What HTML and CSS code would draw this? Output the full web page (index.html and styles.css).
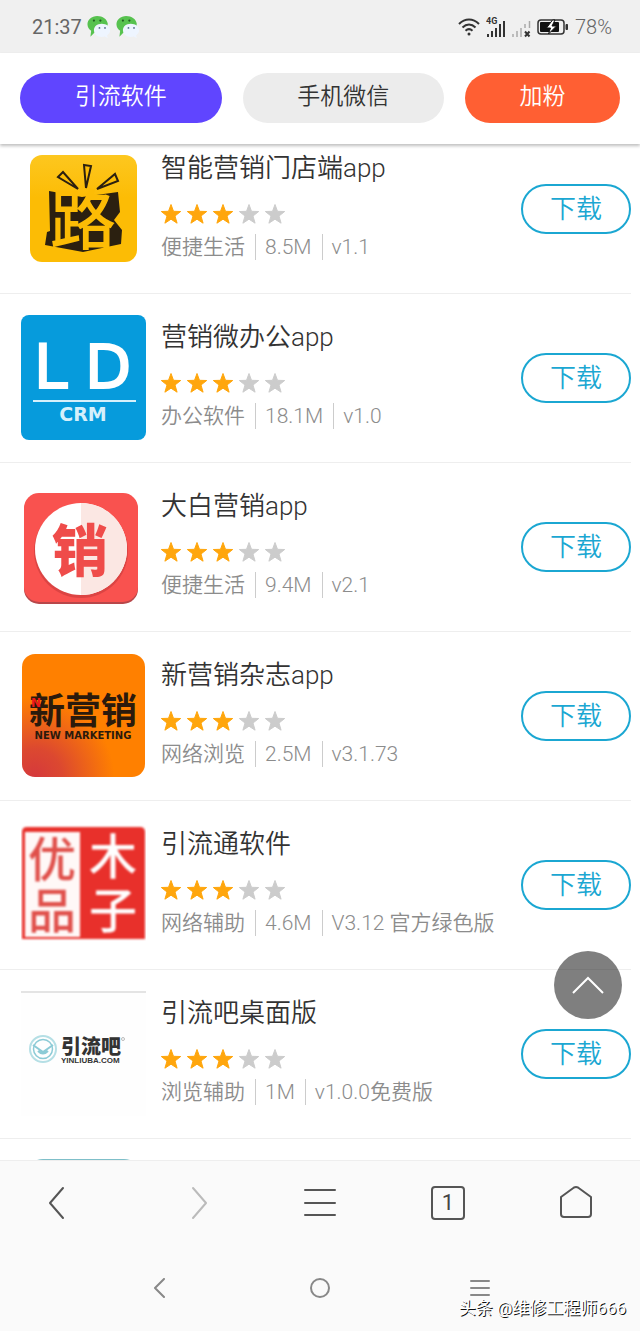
FILE: index.html
```html
<!DOCTYPE html>
<html lang="zh-Hans">

<head>
  <meta charset="UTF-8" />
  <meta name="viewport" content="width=device-width, initial-scale=1.0" />
  <title>引流软件</title>
  <link rel="stylesheet" href="styles.css">
</head>

<body>
  <svg class="defs" aria-hidden="true">
    <symbol id="star" viewBox="0 0 20 20">
      <path d="M10 0.5l2.5 6.8 7.2.2-5.7 4.5 2.1 7.2L10 15.2 3.9 19.2 6 12 .3 7.5l7.2-.2z" />
    </symbol>
    <symbol id="wechat" viewBox="0 0 26 26">
      <path d="M11 1C5 1 .5 5 .5 10c0 3 1.500 5.200 4 7l-.8 6.500 5-5c5 1 13.800-2 13.800-9C22 4.500 17 1 11 1z" fill="#57c24f" />
      <path d="M16 9.500c-5 0-8.500 3-8.500 7s3.800 7.200 8.500 7.200c1 0 2-.1 3-.4l3.500 1.700-.8-3c2-1.300 3.300-3.200 3.300-5.500 0-4-4-7-9-7z" fill="#eef5ff" />
      <circle cx="7.500" cy="6" r="1.200" fill="#215f22" />
      <circle cx="14.500" cy="6" r="1.200" fill="#215f22" />
      <circle cx="13.500" cy="14" r="1" fill="#58708c" />
      <circle cx="19.500" cy="14" r="1" fill="#58708c" />
    </symbol>
  </svg>

  <div class="status-bar">
    <div class="status-left">
      <span>21:37</span>
      <svg width="24" height="26"><use href="#wechat" /></svg>
      <svg width="24" height="26"><use href="#wechat" /></svg>
    </div>
    <div class="status-right">
      <svg width="22" height="22" viewBox="0 0 22 22" fill="none" stroke="#333" stroke-width="2">
        <path d="M1 8c6-6 14-6 20 0M4.500 11.500c4-4 9-4 13 0M7.500 14.700c2.200-2 4.800-2 7 0" />
        <circle cx="11" cy="18" r="1.500" fill="#333" stroke="none" />
      </svg>
      <svg width="20" height="22" viewBox="0 0 20 22">
        <path d="M2 21v-3M6 21v-6M10 21v-9M14 21V8M18 21V5" stroke="#333" stroke-width="2" />
        <text class="network" x="0" y="8">4G</text>
      </svg>
      <svg width="19" height="22" viewBox="0 0 19 22">
        <path d="M1 21v-3M5 21v-6M9 21v-9M13 12V8M17.500 12V5" stroke="#aaa" stroke-width="1.500" />
        <path d="M13 15.500l4.500 5M17.500 15.500l-4.500 5" stroke="#333" stroke-width="2" />
      </svg>
      <svg width="32" height="18" viewBox="0 0 32 18">
        <rect x="1" y="2" width="26" height="14" rx="3" fill="none" stroke="#333" stroke-width="1.500" />
        <rect x="3" y="4" width="19" height="10" rx="1" fill="#111" />
        <path d="M29 6.500h1.500v5H29z" fill="#333" stroke="#333" />
        <path d="M15.500 2l-6 8h4l-2 6 8-8h-4.500l3-6z" fill="#fff" stroke="#111" />
      </svg>
      <span class="battery">78%</span>
    </div>
  </div>

  <nav class="tabs">
    <a href="#" class="tab tab-purple">引流软件</a>
    <a href="#" class="tab tab-gray">手机微信</a>
    <a href="#" class="tab tab-orange">加粉</a>
  </nav>

  <main>
    <ul class="app-list">
      <li class="app">
        <svg class="app-icon" viewBox="0 0 125 125">
          <defs>
            <linearGradient id="gold" x1="0" y1="0" x2="0" y2="1">
              <stop offset="0" stop-color="#fdc71f" />
              <stop offset=".4" stop-color="#fcbc05" />
            </linearGradient>
          </defs>
          <rect x="9" y="9" width="107" height="107" rx="12" fill="url(#gold)" />
          <path d="M37 31l5-5 15 17zM63 19l7 1-5 22zM94 28l3 7-21 8z" fill="#fcbc05" stroke="#2b2010" stroke-width="2" />
          <path d="M28 45l33 6 36-5 2 20-6 8 8 10-1 14-38 8-38-7 2-13 3-1z" fill="#2b2010" />
          <text class="logo-road" x="62" y="98">路</text>
        </svg>
        <div class="info">
          <h2>智能营销门店端app</h2>
          <div class="stars"><svg><use href="#star" /></svg><svg><use href="#star" /></svg><svg><use href="#star" /></svg><svg class="off"><use href="#star" /></svg><svg class="off"><use href="#star" /></svg></div>
          <p class="meta"><span>便捷生活</span><span>8.5M</span><span>v1.1</span></p>
        </div>
        <button class="download">下载</button>
      </li>

      <li class="app">
        <svg class="app-icon" viewBox="0 0 125 125">
          <rect width="125" height="125" rx="8" fill="#069bdc" />
          <text class="logo-ld" x="13" y="73">L</text>
          <text class="logo-ld" x="64" y="73">D</text>
          <path d="M12 86h103" stroke="#d5f0fb" stroke-width="2" />
          <text class="logo-crm" x="62" y="106">CRM</text>
        </svg>
        <div class="info">
          <h2>营销微办公app</h2>
          <div class="stars"><svg><use href="#star" /></svg><svg><use href="#star" /></svg><svg><use href="#star" /></svg><svg class="off"><use href="#star" /></svg><svg class="off"><use href="#star" /></svg></div>
          <p class="meta"><span>办公软件</span><span>18.1M</span><span>v1.0</span></p>
        </div>
        <button class="download">下载</button>
      </li>

      <li class="app">
        <svg class="app-icon" viewBox="0 0 125 125">
          <rect x="3" y="11" width="114" height="109" rx="15" fill="#b8474a" />
          <rect x="3" y="9" width="114" height="109" rx="15" fill="#f9524f" />
          <circle cx="60" cy="67" r="47" fill="#dc4443" />
          <circle cx="60" cy="65" r="46" fill="#fff" />
          <path d="M60 19a46 46 0 0 1 0 92z" fill="#fbe7e3" />
          <text class="logo-sale" x="59" y="87">销</text>
        </svg>
        <div class="info">
          <h2>大白营销app</h2>
          <div class="stars"><svg><use href="#star" /></svg><svg><use href="#star" /></svg><svg><use href="#star" /></svg><svg class="off"><use href="#star" /></svg><svg class="off"><use href="#star" /></svg></div>
          <p class="meta"><span>便捷生活</span><span>9.4M</span><span>v2.1</span></p>
        </div>
        <button class="download">下载</button>
      </li>

      <li class="app">
        <svg class="app-icon" viewBox="0 0 125 125">
          <defs>
            <radialGradient id="sunset" cx=".1" cy="1" r=".65">
              <stop offset="0" stop-color="#d5393c" />
              <stop offset=".35" stop-color="#dc4830" />
              <stop offset="1" stop-color="#ff8000" />
            </radialGradient>
          </defs>
          <rect x="1" y="1" width="123" height="123" rx="13" fill="url(#sunset)" />
          <text class="logo-magazine" x="62" y="71">新营销</text>
          <text class="logo-n" x="10" y="54">N</text>
          <text class="logo-marketing" x="62" y="86">NEW MARKETING</text>
        </svg>
        <div class="info">
          <h2>新营销杂志app</h2>
          <div class="stars"><svg><use href="#star" /></svg><svg><use href="#star" /></svg><svg><use href="#star" /></svg><svg class="off"><use href="#star" /></svg><svg class="off"><use href="#star" /></svg></div>
          <p class="meta"><span>网络浏览</span><span>2.5M</span><span>v3.1.73</span></p>
        </div>
        <button class="download">下载</button>
      </li>

      <li class="app">
        <svg class="app-icon" viewBox="0 0 125 125">
          <g class="seal">
            <path d="M6 5h113q5 0 5 5v107H1V10q0-5 5-5z" fill="#e8302b" />
            <path d="M4 10h55v105H4z" fill="#fff8f7" />
            <text x="31" y="55" fill="#e0504b">优</text>
            <text x="31" y="106" fill="#e0504b">品</text>
            <text x="92" y="52" fill="#fff">木</text>
            <text x="92" y="106" fill="#fff">子</text>
          </g>
        </svg>
        <div class="info">
          <h2>引流通软件</h2>
          <div class="stars"><svg><use href="#star" /></svg><svg><use href="#star" /></svg><svg><use href="#star" /></svg><svg class="off"><use href="#star" /></svg><svg class="off"><use href="#star" /></svg></div>
          <p class="meta"><span>网络辅助</span><span>4.6M</span><span>V3.12 官方绿色版</span></p>
        </div>
        <button class="download">下载</button>
      </li>

      <li class="app">
        <svg class="app-icon" viewBox="0 0 125 125">
          <rect width="125" height="125" fill="#fefefe" />
          <path d="M0 1h125" stroke="#e4e4e4" stroke-width="2" />
          <g fill="none" stroke="#8ccbd6">
            <circle cx="22" cy="58" r="13" stroke-width="2" stroke="#b5dfe5" />
            <circle cx="22" cy="58" r="9.500" stroke-width="1.500" />
            <path d="M12 54l10 7 10-7M17 60q5 5 10 0" stroke-width="2" />
          </g>
          <text class="logo-yin" x="40" y="63">引流吧</text>
          <text class="logo-url" x="40" y="72">YINLIUBA.COM</text>
          <circle cx="102" cy="48" r="1.500" fill="none" stroke="#bbb" />
        </svg>
        <div class="info">
          <h2>引流吧桌面版</h2>
          <div class="stars"><svg><use href="#star" /></svg><svg><use href="#star" /></svg><svg><use href="#star" /></svg><svg class="off"><use href="#star" /></svg><svg class="off"><use href="#star" /></svg></div>
          <p class="meta"><span>浏览辅助</span><span>1M</span><span>v1.0.0免费版</span></p>
        </div>
        <button class="download">下载</button>
      </li>

      <li class="app">
        <svg class="app-icon" viewBox="0 0 125 125">
          <rect x="4" width="117" height="125" rx="18" fill="#7fbfc9" />
        </svg>
      </li>
    </ul>

    <button class="to-top" aria-label="返回顶部">
      <svg width="32" height="18" viewBox="0 0 32 18" fill="none" stroke="#fff" stroke-width="2">
        <path d="M1 17L16 2l15 15" />
      </svg>
    </button>
  </main>

  <footer>
    <div class="toolbar">
      <button aria-label="后退">
        <svg width="32" height="36" viewBox="0 0 32 36"><path d="M15 3L2 18l13 15" /></svg>
      </button>
      <button aria-label="前进" class="disabled">
        <svg width="32" height="36" viewBox="0 0 32 36"><path d="M17 3l13 15-13 15" /></svg>
      </button>
      <button aria-label="菜单">
        <svg width="32" height="36" viewBox="0 0 32 36"><path d="M1 5h30M1 18h30M1 30h30" /></svg>
      </button>
      <button aria-label="窗口">
        <span class="tab-count">1</span>
      </button>
      <button aria-label="主页">
        <svg width="34" height="36" viewBox="0 0 34 36"><path d="M2 12L15 2.500q2-1 4 0L32 12v17q0 3-3 3H5q-3 0-3-3z" /></svg>
      </button>
    </div>
    <div class="system-nav">
      <button aria-label="系统返回">
        <svg width="20" height="20" viewBox="0 0 20 20"><path d="M14 1L5 10l9 9" /></svg>
      </button>
      <button aria-label="桌面">
        <svg width="20" height="20" viewBox="0 0 20 20"><circle cx="10" cy="10" r="9" /></svg>
      </button>
      <button aria-label="最近任务">
        <svg width="20" height="20" viewBox="0 0 20 20"><path d="M1 3h18M1 10h18M1 17h18" /></svg>
      </button>
    </div>
    <div class="watermark">头条 @维修工程师666</div>
  </footer>
</body>

</html>
```
FILE: styles.css
```css
* {
  box-sizing: border-box;
}

body {
  margin: 0;
  height: 100vh;
  display: flex;
  flex-direction: column;
  background: #fff;
  color: #333;
  font-family: Roboto, 'Noto Sans CJK SC', sans-serif;
}

button {
  padding: 0;
  border: none;
  background: none;
  font-family: inherit;
  cursor: pointer;
}

svg {
  display: block;
}

.defs {
  position: absolute;
  width: 0;
  height: 0;
}

/* 状态栏 */
.status-bar {
  display: flex;
  justify-content: space-between;
  align-items: center;
  height: 53px;
  padding: 0 28px 0 32px;
  background: #f0f0f0;
  color: #666;
  font-size: 20px;
}

.status-left,
.status-right {
  display: flex;
  align-items: center;
  gap: 6px;
}

.status-left {
  gap: 5px;
}

.battery {
  font-weight: 350;
}

.network {
  font-size: 9px;
  font-weight: 700;
  fill: #333;
}

/* 顶部导航 */
.tabs {
  position: relative;
  z-index: 1;
  display: flex;
  gap: 21px;
  padding: 20px 20px 21px;
  background: #fff;
  box-shadow: 0 2px 3px rgba(0, 0, 0, 0.25);
}

.tab {
  flex: 13;
  height: 50px;
  border-radius: 25px;
  font-size: 23px;
  font-weight: 350;
  line-height: 48px;
  text-align: center;
  text-decoration: none;
}

.tab-purple {
  background: #6045ff;
  color: #fff;
}

.tab-gray {
  background: #ececec;
  color: #333;
}

.tab-orange {
  flex: 10;
  background: #ff5f33;
  color: #fff;
}

/* 软件列表 */
main {
  position: relative;
  flex: 1;
  min-height: 0;
  overflow: hidden;
}

.app-list {
  list-style: none;
  margin: -19px 9px 0 0;
  padding: 0;
}

.app {
  display: flex;
  gap: 15px;
  padding: 21px 0 22px 21px;
  border-bottom: 1px solid #eee;
}

.app:last-child {
  padding-top: 20px;
}

.app-icon {
  width: 125px;
  height: 125px;
  flex: none;
}

.info {
  flex: 1;
  min-width: 0;
  padding-top: 5px;
}

.info h2 {
  margin: 0 0 19px;
  font-size: 26px;
  font-weight: 350;
  line-height: 34px;
}

.stars {
  display: flex;
  gap: 6px;
  margin-bottom: 10px;
}

.stars svg {
  width: 20px;
  height: 20px;
  fill: #ffa60d;
  stroke: #ffa60d;
}

.stars .off {
  fill: #ccc;
  stroke: #ccc;
}

.meta {
  display: flex;
  margin: 0;
  color: #8c8c8c;
  font-size: 21px;
  font-weight: 350;
  line-height: 26px;
  white-space: nowrap;
}

.meta span + span {
  margin-left: 10px;
  padding-left: 9px;
  border-left: 1px solid #ccc;
}

.download {
  align-self: center;
  width: 110px;
  height: 50px;
  border: 2px solid #1ba7d2;
  border-radius: 25px;
  color: #1ba7d2;
  font-size: 26px;
  font-weight: 350;
  line-height: 46px;
}

/* 图标文字 */
.app-icon text {
  font-family: 'Noto Sans CJK SC', sans-serif;
  font-weight: 700;
}

.app-icon .logo-road {
  font-size: 66px;
  font-weight: 500;
  text-anchor: middle;
  fill: #fcbc05;
}

.app-icon .logo-ld {
  font-family: 'DejaVu Sans', sans-serif;
  font-size: 60px;
  font-weight: 400;
  fill: #fff;
  stroke: #fff;
  stroke-width: 2px;
}

.app-icon .logo-crm {
  font-family: 'DejaVu Sans', sans-serif;
  font-size: 19px;
  text-anchor: middle;
  fill: #d5f0fb;
}

.app-icon .logo-sale {
  font-size: 56px;
  font-weight: 900;
  text-anchor: middle;
  fill: #ef4c4a;
}

.app-icon .logo-magazine {
  font-size: 36px;
  text-anchor: middle;
  fill: #2b1a0c;
}

.app-icon .logo-n {
  font-family: 'DejaVu Sans', sans-serif;
  font-size: 12px;
  fill: #f01818;
}

.app-icon .logo-marketing {
  font-family: 'DejaVu Sans', sans-serif;
  font-size: 10px;
  text-anchor: middle;
  fill: #2b1a0c;
}

.seal {
  filter: blur(1px);
}

.seal text {
  font-size: 48px;
  font-weight: 500;
  text-anchor: middle;
}

.app-icon .logo-yin {
  font-size: 20px;
  font-weight: 900;
  fill: #333;
}

.app-icon .logo-url {
  font-family: 'Liberation Sans', sans-serif;
  font-size: 8px;
  fill: #333;
}

/* 返回顶部 */
.to-top {
  position: absolute;
  right: 18px;
  bottom: 141px;
  display: flex;
  align-items: center;
  justify-content: center;
  width: 68px;
  height: 68px;
  border-radius: 50%;
  background: rgba(0, 0, 0, 0.5);
}

/* 底部 */
footer {
  position: relative;
  border-top: 1px solid #eee;
  background: #fafafa;
}

footer button {
  display: flex;
  align-items: center;
  justify-content: center;
}

footer svg {
  fill: none;
  stroke: #555;
  stroke-width: 2;
  stroke-linecap: round;
  stroke-linejoin: round;
}

.toolbar {
  display: grid;
  grid-template-columns: repeat(5, 1fr);
  height: 84px;
}

.disabled svg {
  stroke: #bbb;
}

.tab-count {
  width: 34px;
  height: 34px;
  border: 2px solid #555;
  border-radius: 4px;
  color: #444;
  font-size: 22px;
  line-height: 30px;
}

.system-nav {
  display: grid;
  grid-template-columns: repeat(3, 1fr);
  height: 86px;
  padding: 0 80px;
}

.system-nav svg {
  stroke: #888;
}

.watermark {
  position: absolute;
  right: 14px;
  bottom: 10px;
  color: #fff;
  font-size: 17px;
  line-height: 26px;
  text-shadow: 1px 1px 0 #111;
}
```
